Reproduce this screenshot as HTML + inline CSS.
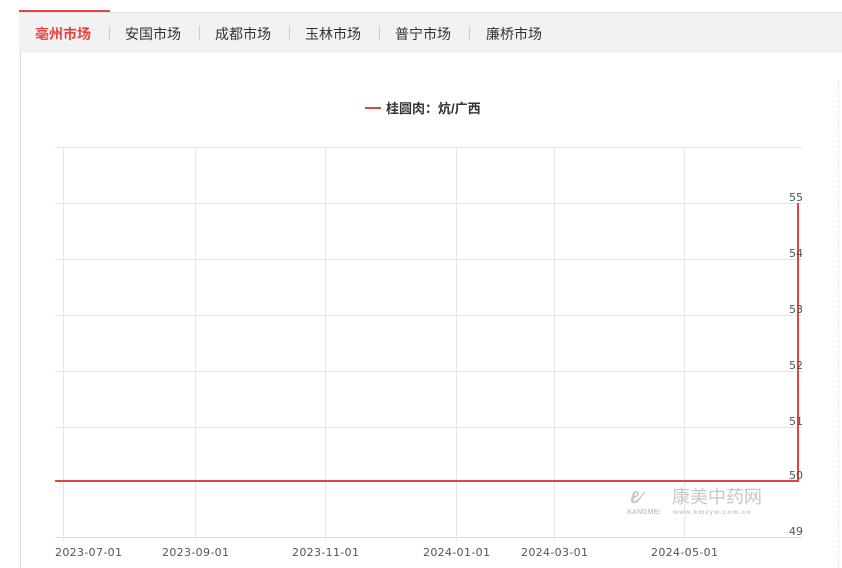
<!DOCTYPE html><html><head><meta charset="utf-8"><style>
body{margin:0;width:842px;height:568px;background:#fff;overflow:hidden;font-family:"Liberation Sans","Noto Sans CJK SC",sans-serif;position:relative}
.bar{position:absolute;left:19px;top:12px;width:823px;height:40px;background:#f2f2f2;border-top:1px solid #e2e2e2}
.act{position:absolute;left:19px;top:10px;width:91px;height:2px;background:#e64340}
.t{position:absolute;top:24px;font-size:14px;color:#333}
.sep{position:absolute;top:26px;width:1px;height:14px;background:#ccc}
.lb{position:absolute;left:20px;top:52px;width:1px;height:516px;background:#ddd}
.rb{position:absolute;left:838px;top:80px;width:0;height:488px;border-left:1px dashed #e4e4e4}
</style></head><body>
<div class="bar"></div><div class="act"></div><div class="lb"></div><div class="rb"></div>
<div class="t" style="left:35px;color:#e64340;font-weight:bold">亳州市场</div>
<div class="sep" style="left:109px"></div>
<div class="t" style="left:125px">安国市场</div>
<div class="sep" style="left:199px"></div>
<div class="t" style="left:215px">成都市场</div>
<div class="sep" style="left:289px"></div>
<div class="t" style="left:305px">玉林市场</div>
<div class="sep" style="left:379px"></div>
<div class="t" style="left:395px">普宁市场</div>
<div class="sep" style="left:469px"></div>
<div class="t" style="left:486px">廉桥市场</div>
<svg width="842" height="568" style="position:absolute;left:0;top:0" font-family="DejaVu Sans, Noto Sans CJK SC, sans-serif">
<line x1="365" y1="108" x2="381" y2="108" stroke="#e64340" stroke-width="2"/>
<text x="386" y="113" font-size="13" font-weight="bold" fill="#333" font-family="Liberation Sans, Noto Sans CJK SC, sans-serif">桂圆肉：炕/广西</text>
<g stroke="#e6e6e6" stroke-width="1">
<line x1="55" y1="147.5" x2="802" y2="147.5"/>
<line x1="55" y1="203.5" x2="802" y2="203.5"/>
<line x1="55" y1="259.5" x2="802" y2="259.5"/>
<line x1="55" y1="315.5" x2="802" y2="315.5"/>
<line x1="55" y1="371.5" x2="802" y2="371.5"/>
<line x1="55" y1="427.5" x2="802" y2="427.5"/>
<line x1="55" y1="537.5" x2="802" y2="537.5" stroke="#ddd"/>
<line x1="63.5" y1="147" x2="63.5" y2="541"/>
<line x1="195.5" y1="147" x2="195.5" y2="541"/>
<line x1="325.5" y1="147" x2="325.5" y2="541"/>
<line x1="456.5" y1="147" x2="456.5" y2="541"/>
<line x1="554.5" y1="147" x2="554.5" y2="541"/>
<line x1="684.5" y1="147" x2="684.5" y2="541"/>
</g>
<polyline points="55,481 798,481 798,203" fill="none" stroke="#e64340" stroke-width="2"/>
<g font-size="11" fill="#555">
<text x="789" y="201">55</text><text x="789" y="257">54</text><text x="789" y="313">53</text>
<text x="789" y="369">52</text><text x="789" y="425">51</text><text x="789" y="479">50</text><text x="789" y="535">49</text>
<text x="55" y="556" textLength="67">2023-07-01</text><text x="162" y="556" textLength="67">2023-09-01</text><text x="292" y="556" textLength="67">2023-11-01</text>
<text x="423" y="556" textLength="67">2024-01-01</text><text x="521" y="556" textLength="67">2024-03-01</text><text x="651" y="556" textLength="67">2024-05-01</text>
</g>
<g fill="#c8c8c8" font-family="Liberation Sans, Noto Sans CJK SC, sans-serif"><text x="630" y="503" font-size="17" font-style="italic" font-weight="bold">ℓ⁄</text>
<text x="672" y="503" font-size="18">康美中药网</text>
<text x="627" y="514" font-size="7" font-weight="bold">KANGMEI</text>
<text x="673" y="514" font-size="6.5" font-weight="bold" letter-spacing="1">www.kmzyw.com.cn</text></g>
</svg>
</body></html>
